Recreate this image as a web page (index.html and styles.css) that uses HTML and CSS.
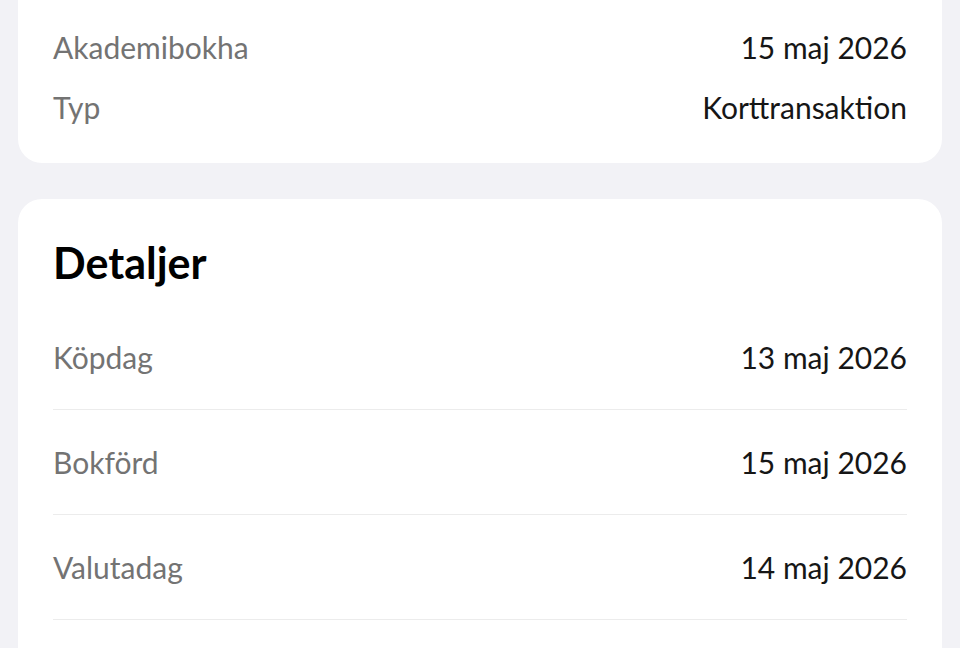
FILE: index.html
```html
<!DOCTYPE html>
<html lang="sv">
<head>
    <meta charset="UTF-8">
    <meta name="viewport" content="width=device-width, initial-scale=1.0">
    <title>Transaktion</title>
    <link rel="stylesheet" href="styles.css">
</head>
<body>

    <div class="page">
        <div class="card card-top">
            <div class="row">
                <span class="label">Akademibokha</span>
                <span class="value">15 maj 2026</span>
            </div>
            <div class="row">
                <span class="label">Typ</span>
                <span class="value">Korttransaktion</span>
            </div>
        </div>

        <div class="card card-details">
            <h2>Detaljer</h2>
            <div class="detail-list">
                <div class="detail-row">
                    <span class="label">Köpdag</span>
                    <span class="value">13 maj 2026</span>
                </div>
                <div class="detail-row">
                    <span class="label">Bokförd</span>
                    <span class="value">15 maj 2026</span>
                </div>
                <div class="detail-row">
                    <span class="label">Valutadag</span>
                    <span class="value">14 maj 2026</span>
                </div>
            </div>
        </div>
    </div>

</body>
</html>
```

FILE: styles.css
```css
body {
    margin: 0;
    background: #f2f2f6;
    font-family: Lato, 'Open Sans', sans-serif;
    color: #111;
}

.page {
    display: flex;
    flex-direction: column;
    gap: 36px;
    padding: 0 18px;
}

.card {
    background: #fff;
    border-radius: 24px;
    padding: 40px 35px 0;
}

.card-top {
    border-radius: 0 0 24px 24px;
    padding: 17px 35px 26px;
}

.card-details {
    padding-bottom: 60px;
}

.row {
    display: flex;
    justify-content: space-between;
    align-items: center;
    height: 60px;
}

.label {
    font-size: 30px;
    color: #737373;
}

.value {
    font-size: 30px;
    color: #161616;
}

h2 {
    margin: 0 0 18px;
    font-size: 43px;
    line-height: 48px;
    font-weight: 700;
    color: #000;
}

.detail-row {
    display: flex;
    justify-content: space-between;
    align-items: center;
    height: 104px;
    border-bottom: 1px solid #ececec;
}
```
